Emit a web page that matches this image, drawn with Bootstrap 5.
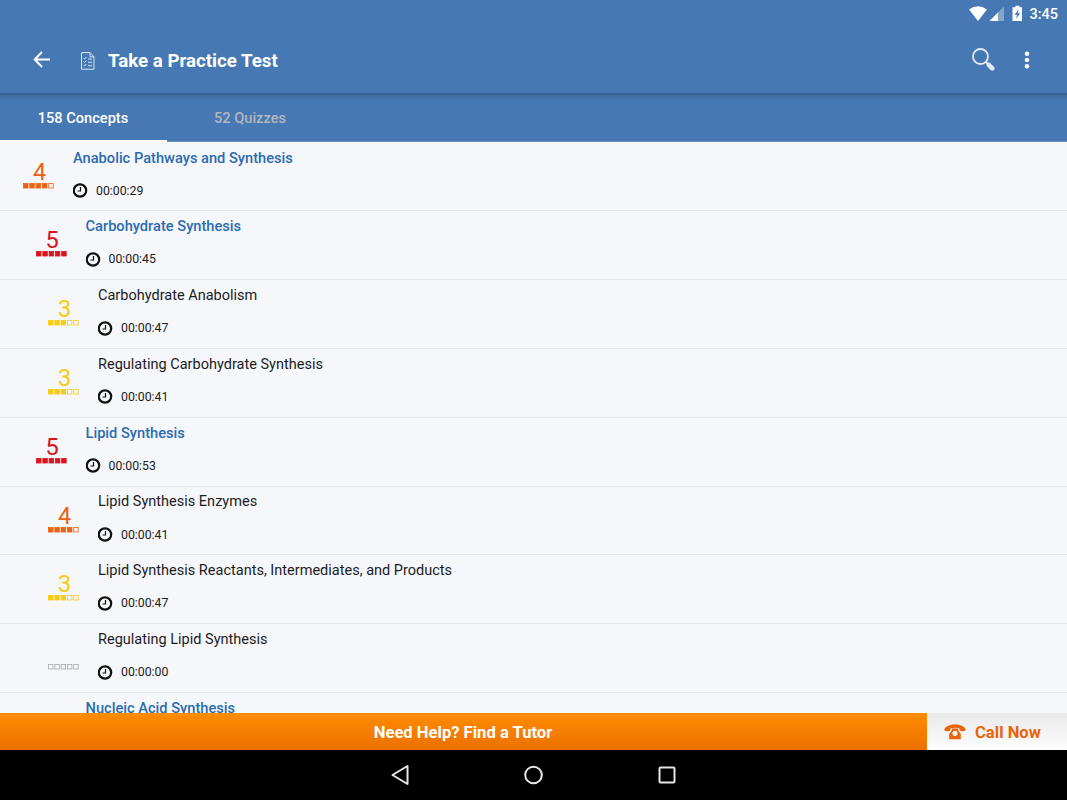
<!DOCTYPE html>
<html lang="en">
<head>
    <meta charset="UTF-8">
    <meta name="viewport" content="width=device-width, initial-scale=1.0">
    <title>Take a Practice Test</title>
    <link rel="stylesheet" href="https://cdn.jsdelivr.net/npm/bootstrap@5.3.0/dist/css/bootstrap.min.css">
    <style>
        body { font-family: Roboto, "Liberation Sans", sans-serif; background-color: #f5f7fb; color: #1c1c1e; }
        svg { display: block; flex-shrink: 0; }
        .app-bar { background-color: #4678b3; color: #fff; }
        .status-bar { height: 27px; padding-right: 9px; font-size: 14.5px; font-weight: 500; line-height: 27px; }
        .status-time { margin-left: 7px; padding-top: 1px; }
        .tool-bar { height: 66px; padding: 0 36px 0 33px; }
        .tool-title { font-size: 18.7px; font-weight: 700; line-height: 24px; margin: 1px 0 0 13px; }
        .doc-icon { margin: 2px 0 0 29px; }
        .search-icon { margin-bottom: 2px; }
        .more-icon { margin: 0 1px 1px 29px; }
        .tab-bar { height: 49px; background: linear-gradient(#395f8e, #4270a8 4px, #4678b3 8px); border-bottom: 1px solid #6d8fc4; }
        .tab-bar .nav-link { width: 167px; height: 49px; padding: 4px 1px 0 0; border-radius: 0; color: #b4b6bb; font-size: 14.6px; font-weight: 500; line-height: 43px; text-align: center; }
        .tab-bar .nav-link.active { color: #fff; border-bottom: 2px solid #fff; }

        /* Concept list */
        .concept-list { height: 571px; padding-top: .6px; }
        .concept-row { height: 68.8px; border-bottom: 1px solid #e3e4e8; padding-left: calc(23px + var(--depth) * 12.5px); }
        .score { width: 31px; margin-right: 19px; padding-top: 17px; }
        .score-number { height: 23px; font-size: 23.5px; font-weight: 400; line-height: 25px; text-align: center; padding-left: 2px; }
        .concept-name { font-size: 14.52px; line-height: 20px; padding-top: 5px; }
        .concept-name.leaf { padding-top: 5.7px; margin-bottom: -.7px; }
        .concept-name.topic { font-size: 14.65px; font-weight: 500; color: #2b6cb0; }
        .concept-time { font-size: 12.3px; line-height: 16px; margin-top: 15px; gap: 8px; }
        .score-4 { color: #ed6012; }
        .score-5 { color: #d8141c; }
        .score-3 { color: #f8cb13; }
        .score-0 { color: #a8a8a8; }

        .help-bar { height: 37px; font-size: 16.6px; font-weight: 700; }
        .find-tutor { width: 927px; padding-top: 3px; padding-right: 1px; background: linear-gradient(#ff8c00, #ed7000); color: #fff; }
        .call-now { background: linear-gradient(#e9e9e9, #fdfdfd); color: #ea640c; padding: 3px 0 0 17px; gap: 9px; }
        .call-now svg { margin-bottom: 2px; }
        .system-nav { height: 50px; background-color: #000; }
    </style>
</head>
<body class="vh-100 overflow-hidden d-flex flex-column">
    <header class="app-bar">
        <div class="status-bar d-flex align-items-center justify-content-end">
            <svg width="53" height="18" viewBox="0 0 53 18" fill="#fff">
                <path d="M0 4.500Q9 -2 18 4.500L9 16Z"/>
                <path d="M35 1.500V16H20.500Z" opacity=".35"/>
                <path d="M29 7.500V16H20.500Z"/>
                <path d="M46.500 .7H50.500V2.300H53V16H43.500V2.300H46.500Z"/>
                <path d="M49.500 4.500L45.500 9.800H48L47 13.800L51.200 8.300H48.700Z" fill="#4678b3"/>
            </svg>
            <span class="status-time">3:45</span>
        </div>
        <div class="tool-bar d-flex align-items-center">
            <svg width="18" height="18" viewBox="0 0 18 18" fill="none" stroke="#fff" stroke-width="2">
                <path d="M17 8.500H2M9 1L1.700 8.500L9 16"/>
            </svg>
            <svg class="doc-icon" width="15" height="18" viewBox="0 0 15 18" fill="none" stroke="#dce6f3">
                <path d="M1.500 .6H10L14 4.800V17.200H1.500ZM10 .6V4.800H14"/>
                <path d="M3.700 6l1 1 1.500-2M3.700 9.500l1 1 1.500-2M3.700 13l1 1 1.500-2M8 7H12M8 10.300H12M8 13.700H12"/>
            </svg>
            <span class="tool-title">Take a Practice Test</span>
            <svg class="search-icon ms-auto" width="23" height="23" viewBox="0 0 23 23" fill="none" stroke="#e4eaf5">
                <circle cx="8.500" cy="8.500" r="7.500" stroke-width="1.800"/>
                <path d="M13.700 13.700L16 16" stroke-width="2"/>
                <path d="M16.800 16.800L20.300 20.300" stroke-width="4.500" stroke-linecap="round"/>
            </svg>
            <svg class="more-icon" width="6" height="18" viewBox="0 0 6 18" fill="#fff">
                <circle cx="3" cy="2.700" r="2.300"/><circle cx="3" cy="9" r="2.300"/><circle cx="3" cy="15.300" r="2.300"/>
            </svg>
        </div>
    </header>
    <nav class="tab-bar nav flex-nowrap">
        <a class="nav-link active" href="#">158 Concepts</a>
        <a class="nav-link" href="#">52 Quizzes</a>
    </nav>

    <main id="concept-list" class="concept-list overflow-hidden"></main>

    <div class="help-bar d-flex">
        <div class="find-tutor d-flex align-items-center justify-content-center">Need Help? Find a Tutor</div>
        <div class="call-now d-flex align-items-center flex-grow-1">
            <svg width="22" height="16" viewBox="0 0 22 16" fill="currentColor">
                <path d="M.3 5.500C1.500 2 6 .5 11 .5S20.500 2 21.700 5.500C21.900 7 20 7.300 18 7.200C16 7.100 15.300 6.200 15.500 4.400C12.500 3.500 9.500 3.500 6.500 4.400C6.700 6.200 6 7.100 4 7.200C2 7.300 .1 7 .3 5.500Z"/>
                <path fill-rule="evenodd" d="M8 4.500H14V6L16.800 10V15.300H5.200V10L8 6ZM11 6.700A2.600 2.600 0 1 0 11 11.900A2.600 2.600 0 1 0 11 6.700Z"/>
            </svg>
            <span>Call Now</span>
        </div>
    </div>
    <footer class="system-nav">
        <svg class="mx-auto" width="288" height="50" viewBox="0 0 288 50" fill="none" stroke="#e6e6e6" stroke-width="2">
            <path d="M17.500 16V34L2.500 25Z" stroke-linejoin="round"/>
            <circle cx="143.500" cy="25" r="8.300"/>
            <rect x="269.500" y="17.500" width="15" height="15" rx="1"/>
        </svg>
    </footer>

    <script>
        const concepts = [
            { name: "Anabolic Pathways and Synthesis", depth: 0, score: 4, time: "00:00:29" },
            { name: "Carbohydrate Synthesis", depth: 1, score: 5, time: "00:00:45" },
            { name: "Carbohydrate Anabolism", depth: 2, score: 3, time: "00:00:47" },
            { name: "Regulating Carbohydrate Synthesis", depth: 2, score: 3, time: "00:00:41" },
            { name: "Lipid Synthesis", depth: 1, score: 5, time: "00:00:53" },
            { name: "Lipid Synthesis Enzymes", depth: 2, score: 4, time: "00:00:41" },
            { name: "Lipid Synthesis Reactants, Intermediates, and Products", depth: 2, score: 3, time: "00:00:47" },
            { name: "Regulating Lipid Synthesis", depth: 2, score: 0, time: "00:00:00" },
            { name: "Nucleic Acid Synthesis", depth: 1, score: 3 }
        ];

        const clock = `<svg width="15" height="15" viewBox="0 0 15 15" fill="none" stroke="#111">
            <circle cx="7" cy="7.500" r="6.200" stroke-width="2.200"/><path d="M7.500 4V8H4.500" stroke-width="1.200"/></svg>`;

        // five boxes, the first ones filled up to the score
        function scoreBoxes(score) {
            let boxes = "";
            for (let i = 0; i < 5; i++) {
                boxes += `<rect x="${i * 6.3 + 0.5}" y=".5" width="4.5" height="4.5" fill="${i < score ? "currentColor" : "none"}"/>`;
            }
            return `<svg width="31" height="6" viewBox="0 0 31 6" stroke="currentColor" stroke-width=".8">${boxes}</svg>`;
        }

        document.getElementById("concept-list").innerHTML = concepts.map(c => `
            <div class="concept-row d-flex" style="--depth:${c.depth}">
                <div class="score score-${c.score}">
                    <div class="score-number">${c.score || ""}</div>
                    ${scoreBoxes(c.score)}
                </div>
                <div>
                    <div class="concept-name ${c.depth < 2 ? "topic" : "leaf"}">${c.name}</div>
                    ${c.time ? `<div class="concept-time d-flex align-items-center">${clock}<span>${c.time}</span></div>` : ""}
                </div>
            </div>`).join("");
    </script>
    <script src="https://cdn.jsdelivr.net/npm/bootstrap@5.3.0/dist/js/bootstrap.bundle.min.js"></script>
</body>
</html>
